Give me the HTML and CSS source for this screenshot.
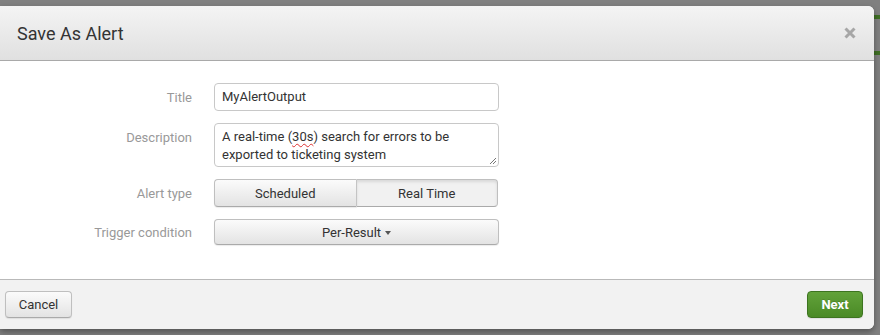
FILE: index.html
```html
<!DOCTYPE html>
<html>
<head>
<meta charset="utf-8">
<link rel="stylesheet" href="styles.css">
</head>
<body>
<div class="bg-mark mark-a"></div>
<div class="bg-mark mark-b"></div>
<div class="modal">
  <div class="modal-header">
    <h3 class="modal-title">Save As Alert</h3>
    <svg class="close" width="12" height="12" viewBox="0 0 12 12"><path d="M1.5 1.5L10.5 10.5M10.5 1.5L1.5 10.5" stroke="#a6a6a6" stroke-width="3"/></svg>
  </div>
  <div class="modal-body">
    <div class="form-row">
      <label class="label">Title</label>
      <div class="control input">MyAlertOutput</div>
    </div>
    <div class="form-row">
      <label class="label">Description</label>
      <div class="control textarea">A real-time (<span class="spell">30s</span>) search for errors to be<br>exported to ticketing system<svg class="grip" width="8" height="8" viewBox="0 0 8 8"><path d="M7 1L1 7M7 4L4 7" stroke="#777" stroke-width="1"/></svg></div>
    </div>
    <div class="form-row">
      <label class="label">Alert type</label>
      <div class="control btn-group">
        <span class="btn seg">Scheduled</span>
        <span class="btn seg active">Real Time</span>
      </div>
    </div>
    <div class="form-row">
      <label class="label">Trigger condition</label>
      <div class="control btn dropdown">Per-Result <span class="caret"></span></div>
    </div>
  </div>
  <div class="modal-footer">
    <span class="btn cancel">Cancel</span>
    <span class="btn primary">Next</span>
  </div>
</div>
</body>
</html>
```

FILE: styles.css
```css
html, body {
  margin: 0;
  padding: 0;
  background: #808080;
  font-family: Roboto, "Liberation Sans", sans-serif;
  width: 880px;
  height: 335px;
  overflow: hidden;
  position: relative;
}
.bg-mark {
  position: absolute;
  left: 874px;
  width: 6px;
  height: 4px;
  background: #3f6f24;
}
.mark-a { top: 15px; }
.mark-b { top: 51px; }
.modal {
  position: relative;
  margin-top: 6px;
  width: 874px;
  height: 323px;
  border-radius: 0 6px 6px 0;
  overflow: hidden;
  display: flex;
  flex-direction: column;
  box-shadow: 0 3px 6px rgba(0,0,0,0.35);
  background: #fff;
}
.modal-header {
  height: 55px;
  box-sizing: border-box;
  background: linear-gradient(#f4f4f4, #e0e0e0);
  border-bottom: 1px solid #a9a9a9;
  display: flex;
  align-items: center;
  justify-content: space-between;
  padding: 0 18px 0 17px;
}
.modal-title {
  margin: 0;
  font-size: 18px;
  font-weight: normal;
  color: #333;
  padding-top: 1px;
}
.close {
  display: block;
  margin-top: 0;
}
.modal-body {
  flex: 1;
  background: #fff;
  padding-top: 22px;
  display: flex;
  flex-direction: column;
  gap: 12px;
}
.form-row {
  display: flex;
  align-items: center;
  gap: 22px;
}
.label {
  width: 192px;
  text-align: right;
  color: #999;
  font-size: 13px;
}
.control {
  width: 285px;
  box-sizing: border-box;
  font-size: 12px;
  color: #333;
}
.input {
  height: 28px;
  border: 1px solid #c8c8c8;
  border-radius: 4px;
  padding: 0 7px;
  line-height: 26px;
  font-size: 13px;
}
.textarea {
  position: relative;
  height: 44px;
  border: 1px solid #c8c8c8;
  border-radius: 4px;
  padding: 4px 7px 2px;
  line-height: 18px;
  font-size: 13px;
}
.form-row:nth-child(2) { align-items: flex-start; }
.form-row:nth-child(2) .label { padding-top: 7px; }
.spell {
  text-decoration: underline wavy #d33;
  text-decoration-thickness: 1px;
  text-underline-offset: 2px;
}
.grip {
  position: absolute;
  right: 1px;
  bottom: 1px;
}
.btn {
  display: inline-flex;
  align-items: center;
  justify-content: center;
  box-sizing: border-box;
  border: 1px solid #bfbfbf;
  border-bottom-color: #aaa;
  border-radius: 4px;
  background: linear-gradient(#fbfbfb, #e3e3e3);
  color: #333;
  font-size: 12px;
  box-shadow: 0 1px 1px rgba(0,0,0,0.08);
}
.btn-group {
  display: flex;
  height: 28px;
  width: 284px;
}
.seg {
  flex: 1;
  height: 28px;
  font-size: 13px;
}
.seg:first-child {
  border-radius: 4px 0 0 4px;
  border-right-color: #c4c4c4;
}
.seg.active {
  border-radius: 0 4px 4px 0;
  border-left: none;
  background: #f1f1f1;
  box-shadow: inset 0 2px 3px rgba(0,0,0,0.1);
}
.dropdown {
  height: 26px;
  font-size: 13px;
  display: flex;
}
.caret {
  display: inline-block;
  width: 0;
  height: 0;
  border-left: 3px solid transparent;
  border-right: 3px solid transparent;
  border-top: 4px solid #555;
  margin-left: 4px;
  margin-top: 1px;
}
.modal-footer {
  height: 50px;
  box-sizing: border-box;
  border-top: 1px solid #b9b9b9;
  background: #f2f2f2;
  display: flex;
  justify-content: space-between;
  align-items: flex-start;
  padding: 11px 11px 0 5px;
}
.cancel {
  width: 67px;
  height: 27px;
  font-size: 13px;
}
.primary {
  width: 56px;
  height: 27px;
  font-size: 13px;
  font-weight: bold;
  color: #fff;
  background: linear-gradient(#62a23a, #4a8a26);
  border-color: #3d7420;
  text-shadow: 0 -1px 0 rgba(0,0,0,0.15);
}
```
